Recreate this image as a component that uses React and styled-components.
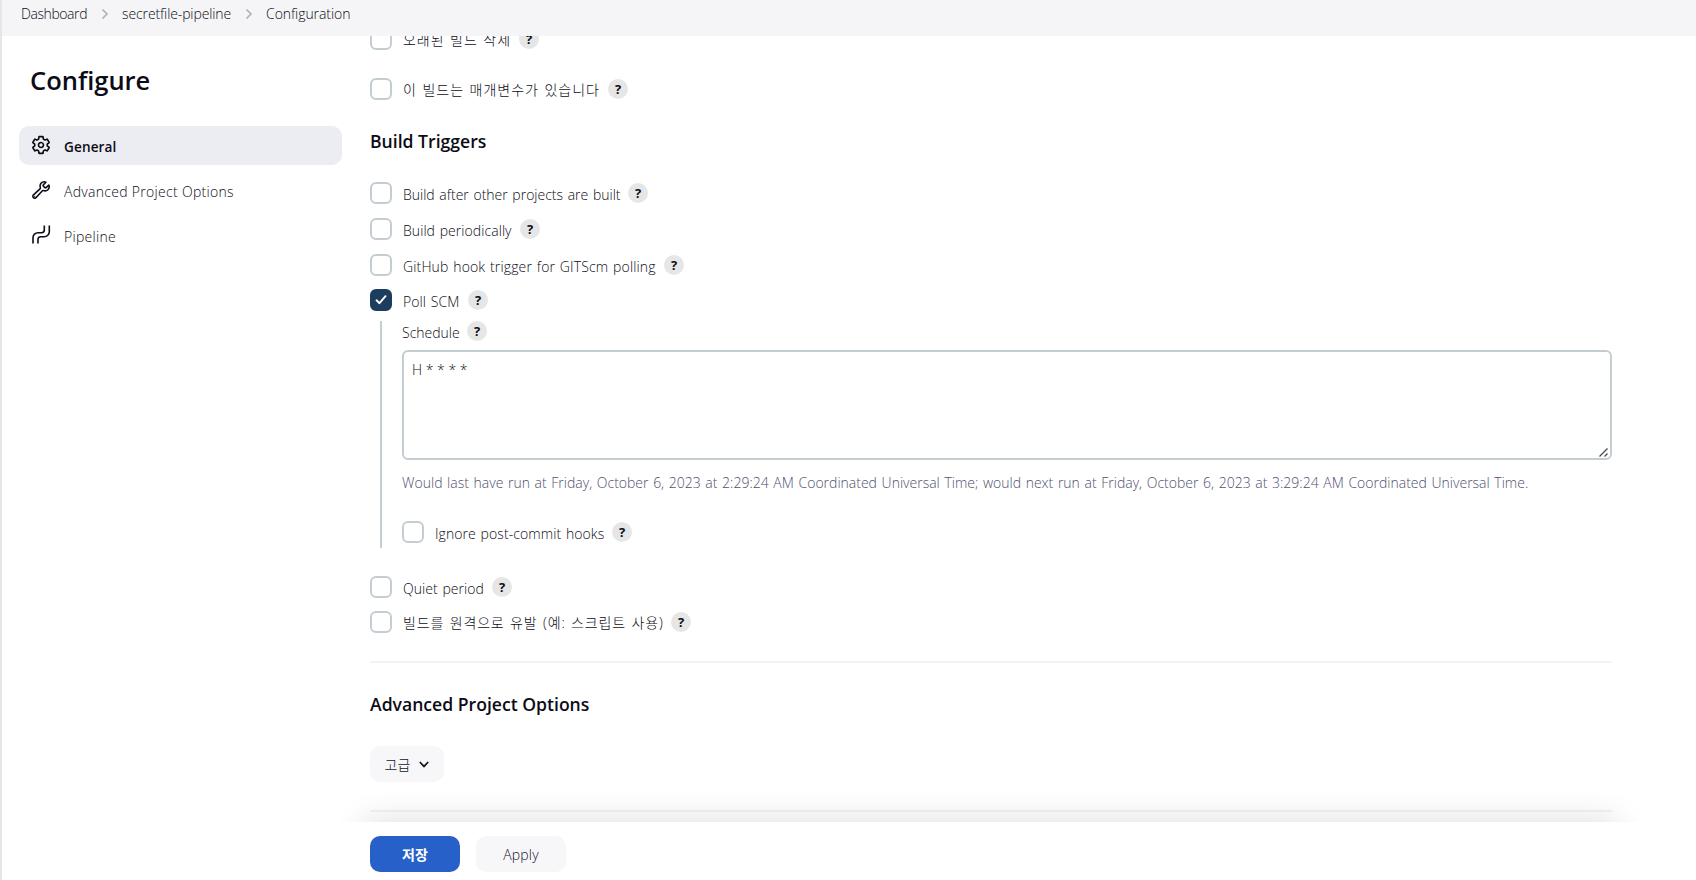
import styled, { createGlobalStyle } from 'styled-components';
import { IoSettingsOutline, IoBuildOutline } from 'react-icons/io5';

const GlobalStyle = createGlobalStyle`
  *, *::before, *::after {
    box-sizing: border-box;
  }

  body {
    margin: 0;
    overflow: hidden;
    background: #fff;
    color: #0c0c16;
    font-family: "Open Sans", "Noto Sans CJK KR", sans-serif;
    font-size: 14px;
    font-weight: 300;
  }

  h1, h2, p {
    margin: 0;
  }

  button, textarea {
    font: inherit;
    color: inherit;
  }
`;

const Page = styled.div`
  display: flex;
  flex-direction: column;
  height: 880px;
  border-left: 2px solid #e6e6ea;
`;

const Breadcrumbs = styled.nav`
  display: flex;
  align-items: center;
  flex: none;
  height: 36px;
  padding: 0 0 9px 19px;
  background: #f5f5f8;
`;

const Crumb = styled.span`
  letter-spacing: ${({ $spacing }) => $spacing}px;
`;

const CrumbArrow = styled.svg`
  width: 6px;
  height: 10px;
  margin: 0 14px 0 15px;
  fill: none;
  stroke: #a9a9b3;
  stroke-width: 1.5;
`;

const Body = styled.div`
  display: flex;
  flex: 1;
  min-height: 0;
`;

const Sidebar = styled.aside`
  flex: none;
  width: 368px;
  padding: 26px 28px 0 17px;
`;

const Title = styled.h1`
  padding-left: 11px;
  font-size: 25.5px;
  font-weight: 650;
  line-height: 36px;
`;

const Tasks = styled.div`
  display: grid;
  gap: 6px;
  margin-top: 28px;
`;

const Task = styled.a`
  display: flex;
  align-items: center;
  gap: 13px;
  height: 39px;
  padding-left: 12px;
  border-radius: 10px;
  background: ${({ $active }) => ($active ? '#ecedf3' : 'transparent')};
  font-weight: ${({ $active }) => ($active ? 600 : 300)};
  font-size: ${({ $active }) => ($active ? '13.6px' : '14px')};
  letter-spacing: ${({ $active }) => ($active ? '0.1px' : '0.3px')};

  svg {
    flex: none;
    width: 20px;
    height: 20px;
    margin-bottom: 2px;
  }

  span {
    padding-top: 2px;
  }
`;

const SettingsIcon = styled(IoSettingsOutline)`
  path {
    stroke-width: 42px;
  }
`;

const BuildIcon = styled(IoBuildOutline)`
  path {
    stroke-width: 40px;
  }
`;

const Main = styled.main`
  display: flex;
  flex: 1;
  flex-direction: column;
  min-width: 0;
  padding-right: 84px;
`;

const Form = styled.div`
  flex: 1;
  min-height: 0;
  overflow: hidden;
  word-spacing: 1px;
`;

const FieldRow = styled.div`
  display: flex;
  align-items: center;
  height: 22px;
  margin-top: ${({ $top }) => $top}px;
`;

const Checkbox = styled.span`
  display: grid;
  place-items: center;
  flex: none;
  width: 22px;
  height: 22px;
  margin-right: 11px;
  border: 2px solid ${({ $checked }) => ($checked ? '#1c3d5d' : '#c4cdd2')};
  border-radius: 6px;
  background: ${({ $checked }) => ($checked ? '#1c3d5d' : '#fff')};
`;

const Label = styled.label`
  width: ${({ $width }) => $width}px;
  padding-top: ${({ $drop = 3 }) => $drop}px;
  line-height: 20px;
  letter-spacing: ${({ $spacing }) => $spacing || 0}px;
  white-space: nowrap;
`;

const HelpButton = styled.a`
  display: grid;
  place-items: center;
  flex: none;
  width: 20px;
  height: 20px;
  border-radius: 50%;
  background: #e6e6e6;
  font-size: 13px;
  font-weight: 700;
  line-height: 20px;
`;

const SectionTitle = styled.h2`
  margin-top: ${({ $top }) => $top}px;
  font-size: 17.6px;
  font-weight: 600;
  line-height: 24px;
  word-spacing: 0;
`;

const Nested = styled.div`
  height: 227px;
  margin: 10px 0 0 10px;
  padding-left: 20px;
  border-left: 2px solid #c4cdd2;
`;

const ScheduleHead = styled.div`
  display: flex;
  align-items: center;
  height: 20px;
`;

const ScheduleBox = styled.div`
  position: relative;
  margin-top: 9px;
`;

const Schedule = styled.textarea`
  display: block;
  width: 100%;
  height: 110px;
  padding: 8px;
  border: 2px solid #c4cdd2;
  border-radius: 6px;
  outline: none;
  line-height: 20px;
  resize: none;
`;

const ResizeGrip = styled.svg`
  position: absolute;
  right: 4px;
  bottom: 3px;
  width: 9px;
  height: 9px;
  stroke: #4a4a4a;
  stroke-width: 1.3;
`;

const Hint = styled.p`
  margin-top: 13px;
  color: #4f4f70;
  line-height: 20px;
  white-space: nowrap;
`;

const Divider = styled.div`
  height: 2px;
  margin-top: 28px;
  background: #f2f2f9;
`;

const Button = styled.button`
  display: flex;
  align-items: center;
  justify-content: center;
  width: ${({ $width }) => $width}px;
  height: 36px;
  padding: 0;
  border: 0;
  border-radius: 10px;
  background: ${({ $primary }) => ($primary ? '#2860ca' : '#f7f7fa')};
  color: ${({ $primary }) => ($primary ? '#fff' : '#14141f')};
  font-weight: ${({ $primary }) => ($primary ? 700 : 300)};
  letter-spacing: ${({ $spacing }) => $spacing || 0}px;
`;

const AdvancedButton = styled(Button)`
  gap: 9px;
  margin-top: 30px;
`;

const BottomBar = styled.div`
  position: relative;
  display: flex;
  flex: none;
  gap: 16px;
  height: 58px;
  padding-top: 14px;
`;

/* only the part of the shadow above the bar is visible */
const BarShadow = styled.div`
  position: absolute;
  right: -30px;
  bottom: 100%;
  left: -30px;
  height: 30px;
  overflow: hidden;
  pointer-events: none;

  &::after {
    content: '';
    position: absolute;
    top: 100%;
    right: 24px;
    left: 24px;
    height: 58px;
    box-shadow: 0 0 35px rgba(0, 0, 0, 0.14);
  }
`;

function PipelineIcon() {
  return (
    <svg viewBox="0 0 20 20" fill="none" stroke="currentColor" strokeWidth="1.6">
      <path d="M13.3 0.5v4.6a2.6 2.6 0 0 1-2.6 2.6H7A5 5 0 0 0 2 12.7v5.8" />
      <path d="M18.3 0.5v6.2a5 5 0 0 1-5 5H9.7A2.7 2.7 0 0 0 7 14.4v4.1" />
    </svg>
  );
}

function Arrow() {
  return (
    <CrumbArrow viewBox="0 0 6 10">
      <path d="M0.5 0.5L5 5L0.5 9.5" />
    </CrumbArrow>
  );
}

function Option({ text, width, top, spacing, checked, drop }) {
  return (
    <FieldRow $top={top}>
      <Checkbox $checked={checked}>
        {checked && (
          <svg width="12" height="10" viewBox="0 0 12 10" fill="none" stroke="#fff" strokeWidth="1.9">
            <path d="M1.5 5.3L4.5 8.2L10.5 1.2" strokeLinecap="round" strokeLinejoin="round" />
          </svg>
        )}
      </Checkbox>
      <Label $width={width} $spacing={spacing} $drop={drop}>{text}</Label>
      <HelpButton>?</HelpButton>
    </FieldRow>
  );
}

function App() {
  return (
    <>
      <GlobalStyle />
      <Page>
        <Breadcrumbs>
          <Crumb $spacing={-0.42}>Dashboard</Crumb>
          <Arrow />
          <Crumb $spacing={-0.12}>secretfile-pipeline</Crumb>
          <Arrow />
          <Crumb $spacing={-0.07}>Configuration</Crumb>
        </Breadcrumbs>

        <Body>
          <Sidebar>
            <Title>Configure</Title>
            <Tasks>
              <Task $active>
                <SettingsIcon />
                <span>General</span>
              </Task>
              <Task>
                <BuildIcon />
                <span>Advanced Project Options</span>
              </Task>
              <Task>
                <PipelineIcon />
                <span>Pipeline</span>
              </Task>
            </Tasks>
          </Sidebar>

          <Main>
            <Form>
              <Option text="오래된 빌드 삭제" width={116} top={-8} spacing={0.95} drop={1} />
              <Option text="이 빌드는 매개변수가 있습니다" width={205} top={28} spacing={0.97} drop={2} />

              <SectionTitle $top={29}>Build Triggers</SectionTitle>
              <Option text="Build after other projects are built" width={225} top={29} />
              <Option text="Build periodically" width={117} top={14} spacing={0.06} />
              <Option text="GitHub hook trigger for GITScm polling" width={261} top={14} spacing={0.14} />
              <Option text="Poll SCM" width={65} top={13} spacing={0.08} checked />
              <Nested>
                <ScheduleHead>
                  <Label $width={65}>Schedule</Label>
                  <HelpButton>?</HelpButton>
                </ScheduleHead>
                <ScheduleBox>
                  <Schedule defaultValue="H * * * *" spellCheck={false} />
                  <ResizeGrip viewBox="0 0 9 9">
                    <path d="M0.5 8.5L8.5 0.5M5.5 8.5L8.5 5.5" />
                  </ResizeGrip>
                </ScheduleBox>
                <Hint>
                  Would last have run at Friday, October 6, 2023 at 2:29:24 AM Coordinated Universal Time; would
                  next run at Friday, October 6, 2023 at 3:29:24 AM Coordinated Universal Time.
                </Hint>
                <Option text="Ignore post-commit hooks" width={177} top={28} spacing={0.08} />
              </Nested>
              <Option text="Quiet period" width={89} top={28} spacing={0.05} />
              <Option text="빌드를 원격으로 유발 (예: 스크립트 사용)" width={268} top={13} spacing={0.85} drop={2} />

              <Divider />
              <SectionTitle $top={29}>Advanced Project Options</SectionTitle>
              <AdvancedButton $width={74}>
                고급
                <svg width="10" height="7" viewBox="0 0 10 7" fill="none" stroke="currentColor" strokeWidth="1.7">
                  <path d="M0.8 1L5 5.4L9.2 1" />
                </svg>
              </AdvancedButton>
              <Divider />
            </Form>

            <BottomBar>
              <BarShadow />
              <Button $primary $width={90}>저장</Button>
              <Button $width={90} $spacing={0.2}>Apply</Button>
            </BottomBar>
          </Main>
        </Body>
      </Page>
    </>
  );
}

export default App;
